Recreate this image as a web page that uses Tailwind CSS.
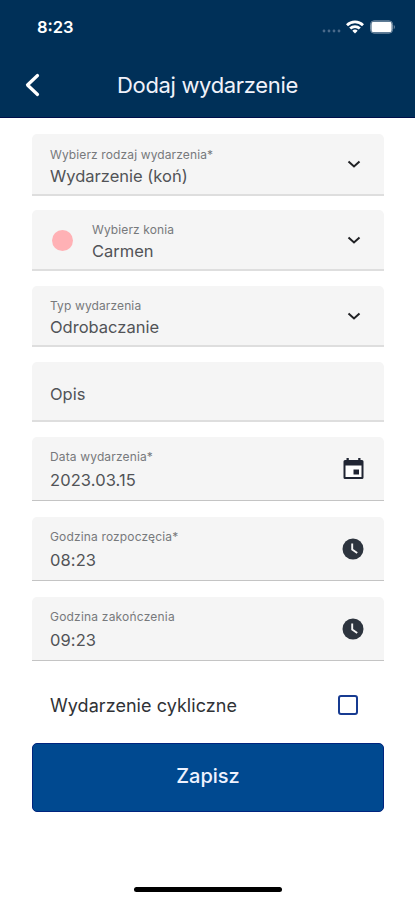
<!DOCTYPE html>
<html lang="pl">
<head>
<meta charset="utf-8">
<meta name="viewport" content="width=device-width, initial-scale=1">
<title>Dodaj wydarzenie</title>
<script src="https://cdn.jsdelivr.net/npm/@tailwindcss/browser@4"></script>
</head>
<body class="bg-white">
<div class="flex h-[900px] w-[415px] flex-col overflow-hidden bg-white font-['Inter','Liberation_Sans',sans-serif]">
  <header class="flex h-[118px] shrink-0 flex-col border-b border-[#00104a] bg-[#003058] text-white">
    <div class="flex h-[54px] items-center justify-between pr-[19px] pl-[37px]">
      <span class="text-[16.5px] leading-6 font-semibold">8:23</span>
      <div class="flex items-center">
        <svg class="mt-2 mr-[5px]" width="19" height="4" viewBox="0 0 19 4" fill="#49698a"><circle cx="2" cy="2" r="1.4"/><circle cx="7" cy="2" r="1.4"/><circle cx="12" cy="2" r="1.4"/><circle cx="17" cy="2" r="1.4"/></svg>
        <svg class="mr-[6px]" width="18" height="14" viewBox="0 0 18 14" fill="none" stroke="#fff" stroke-width="2.8"><path d="M1 5.2a11.4 11.4 0 0 1 16 0"/><path d="M4.2 8.6a6.800 6.800 0 0 1 9.600 0"/><path d="M9 13.600 6.300 10.800a3.900 3.900 0 0 1 5.400 0Z" fill="#fff" stroke="none"/></svg>
        <svg width="26" height="14" viewBox="0 0 27 14"><rect x=".6" y=".6" width="22.800" height="12.800" rx="3.600" fill="none" stroke="#8096ab" stroke-width="1"/><rect x="1.500" y="1.500" width="21" height="11" rx="2.500" fill="#fff"/><path d="M24.700 4.800v4.400c1.400-.6 1.400-3.800 0-4.400Z" fill="#8096ab"/></svg>
      </div>
    </div>
    <div class="grid h-[62px] grid-cols-[66px_1fr_66px] items-center">
      <svg class="ml-[24px]" width="18" height="26" viewBox="0 0 18 26" fill="none" stroke="#fff" stroke-width="3.200" stroke-linecap="round" stroke-linejoin="round"><path d="m13.500 3.500-10 9.500 10 9.500"/></svg>
      <h1 class="text-center text-[22px] leading-7 font-normal tracking-[-0.33px] text-[#f0f2fa]">Dodaj wydarzenie</h1>
    </div>
  </header>

  <main class="flex flex-col pt-4 pr-[31px] pl-8 text-[#515357]">
    <div class="mb-[14px] flex h-[62px] items-center justify-between rounded-t-[5px] border-b-2 border-[#dedede] bg-[#f5f5f5] pr-[22px] pl-[18px]">
      <div class="pt-[7px]"><div class="text-[12px] leading-4 tracking-[0.12px] text-[#77797c]">Wybierz rodzaj wydarzenia*</div><div class="text-[16.5px] leading-[26px]">Wydarzenie (koń)</div></div>
      <svg width="16" height="16" viewBox="0 0 16 16" fill="none" stroke="#202124" stroke-width="2"><path d="m2.500 5.500 5.500 5 5.500-5"/></svg>
    </div>
    <div class="mb-[15px] flex h-[61px] items-center justify-between rounded-t-[5px] border-b-2 border-[#dedede] bg-[#f5f5f5] pr-[22px] pl-5">
      <div class="flex items-center gap-[19px]"><span class="mt-[2px] size-[21px] rounded-full bg-[#ffb1b5]"></span><div class="pt-[7px]"><div class="text-[12px] leading-4 tracking-[0.12px] text-[#77797c]">Wybierz konia</div><div class="text-[16.5px] leading-[26px]">Carmen</div></div></div>
      <svg width="16" height="16" viewBox="0 0 16 16" fill="none" stroke="#202124" stroke-width="2"><path d="m2.500 5.500 5.500 5 5.500-5"/></svg>
    </div>
    <div class="mb-[15px] flex h-[61px] items-center justify-between rounded-t-[5px] border-b-2 border-[#dedede] bg-[#f5f5f5] pr-[22px] pl-[18px]">
      <div class="pt-[7px]"><div class="text-[12px] leading-4 tracking-[0.12px] text-[#77797c]">Typ wydarzenia</div><div class="text-[16.5px] leading-[26px]">Odrobaczanie</div></div>
      <svg width="16" height="16" viewBox="0 0 16 16" fill="none" stroke="#202124" stroke-width="2"><path d="m2.500 5.500 5.500 5 5.500-5"/></svg>
    </div>
    <div class="mb-[15px] flex h-[60px] items-center rounded-t-[5px] border-b-2 border-[#dedede] bg-[#f5f5f5] px-[18px] pt-[6px]">
      <div class="text-[16.5px] leading-6">Opis</div>
    </div>
    <div class="mb-4 flex h-16 items-center justify-between rounded-t-[5px] border-b border-[#c4c4c4] bg-[#f5f5f5] pr-[20px] pl-[18px]">
      <div class="pt-[5px]"><div class="text-[12px] leading-[18px] tracking-[0.15px] text-[#77797c]">Data wydarzenia*</div><div class="text-[16.5px] leading-7 tracking-[0.1px]">2023.03.15</div></div>
      <svg width="21" height="23" viewBox="0 0 21 23" fill="#202533"><path fill-rule="evenodd" d="M3.500 1h2.300v2h9.400V1h2.300v2H19a1.500 1.500 0 0 1 1.500 1.500v16A1.500 1.500 0 0 1 19 22H2a1.500 1.500 0 0 1-1.500-1.500v-16A1.500 1.500 0 0 1 2 3h1.500Z"/><path d="M2.500 8.500h16V20h-16Z" fill="#fff"/><path d="M10.500 12.500h5.500v5h-5.500Z"/></svg>
    </div>
    <div class="mb-4 flex h-16 items-center justify-between rounded-t-[5px] border-b border-[#c4c4c4] bg-[#f5f5f5] pr-[20px] pl-[18px]">
      <div class="pt-[5px]"><div class="text-[12px] leading-[18px] tracking-[0.15px] text-[#77797c]">Godzina rozpoczęcia*</div><div class="text-[16.5px] leading-7 tracking-[0.1px]">08:23</div></div>
      <svg width="22" height="22" viewBox="0 0 22 22"><circle cx="11" cy="11" r="10.500" fill="#2d343e"/><path d="M10.200 5.500v6l5 3.600" fill="none" stroke="#f5f5f5" stroke-width="1.900"/></svg>
    </div>
    <div class="flex h-16 items-center justify-between rounded-t-[5px] border-b border-[#c4c4c4] bg-[#f5f5f5] pr-[20px] pl-[18px]">
      <div class="pt-[5px]"><div class="text-[12px] leading-[18px] tracking-[0.2px] text-[#77797c]">Godzina zakończenia</div><div class="text-[16.5px] leading-7 tracking-[0.1px]">09:23</div></div>
      <svg width="22" height="22" viewBox="0 0 22 22"><circle cx="11" cy="11" r="10.500" fill="#2d343e"/><path d="M10.200 5.500v6l5 3.600" fill="none" stroke="#f5f5f5" stroke-width="1.900"/></svg>
    </div>
    <label class="flex h-[82px] items-center justify-between pt-[6px] pr-[26px] pl-[18px] text-[18px] text-[#303236]">
      <span class="pt-px leading-6 tracking-[0.05px]">Wydarzenie cykliczne</span>
      <span class="size-5 rounded-[3px] border-2 border-[#173b91] bg-white"></span>
    </label>
    <button class="h-[69px] rounded-[5px] border border-[#00247e] bg-[#004990] pb-[3px] text-[20px] font-medium text-[#eef2ff]">Zapisz</button>
  </main>
  <div class="mt-auto mb-[8px] h-[5px] w-[148px] self-center rounded-full bg-black"></div>
</div>
</body>
</html>
